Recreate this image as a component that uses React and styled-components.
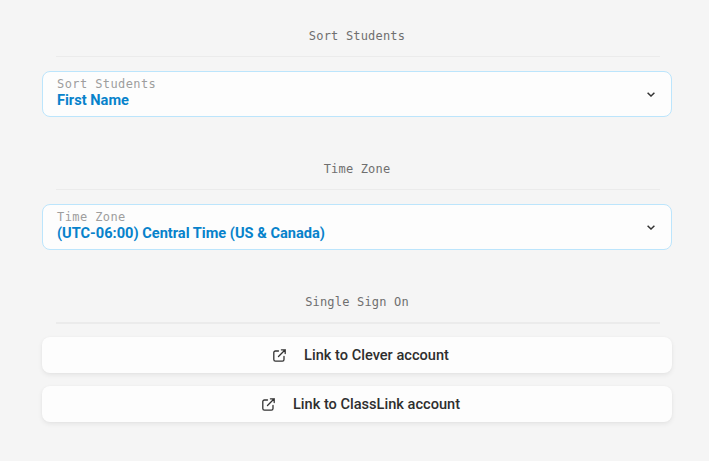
import React from "react";
import styled, { createGlobalStyle } from "styled-components";

const Global = createGlobalStyle`
  html, body { margin: 0; padding: 0; background: #f5f5f5; }
  body { font-family: Roboto, sans-serif; }
`;
const Page = styled.div`
  width: 709px; height: 461px; box-sizing: border-box; overflow: hidden;
  padding: 0 37px 0 42px; display: flex; flex-direction: column;
`;
const Section = styled.section`
  display: flex; flex-direction: column;
`;
const Heading = styled.h2`
  margin: 0 12px 0 14px; height: ${p => p.$height}px; box-sizing: border-box;
  padding: ${p => p.$top}px 2px 0 0;
  font: 400 12px/16px "DejaVu Sans Mono", monospace; letter-spacing: 0.18px;
  color: #6f6f6f; text-align: center;
  border-bottom: ${p => p.$thick ? 2 : 1}px solid #ebebeb;
`;
const SelectBox = styled.div`
  margin-top: 14px; height: 46px; box-sizing: border-box;
  border: 1px solid #bce5fc; border-radius: 8px; background: #fdfdfd;
  padding: 0 16px 0 14px; display: flex; align-items: center; justify-content: space-between;
`;
const SelectText = styled.div`
  display: flex; flex-direction: column; align-self: flex-start; padding-top: 5px;
`;
const SelectLabel = styled.span`
  font: 400 12px/15px "DejaVu Sans Mono", monospace; letter-spacing: 0.41px; color: #9e9e9e;
`;
const SelectValue = styled.span`
  margin-top: -1px; font: 700 14.6px/19px Roboto, sans-serif; color: #0782cb;
`;
const Chevron = styled.svg`width: 8px; height: 5px; flex: none;`;
const LinkButton = styled.button`
  height: 36px; margin-top: 13px; border: 0; border-radius: 8px; background: #fdfdfd;
  box-shadow: 0 2px 5px rgba(0,0,0,.07), 0 0 2px rgba(0,0,0,.03);
  display: flex; align-items: center; justify-content: center; gap: 18px;
  font: 500 14.6px/20px Roboto, sans-serif; color: #2e2e2e; padding: 0 0 0 8px;
`;
const LinkIcon = styled.svg`width: 13px; height: 13px; flex: none;`;

const Arrow = () => (
  <Chevron viewBox="0 0 8 5" fill="none" stroke="#333" strokeWidth="1.5">
    <path d="M.6.8 4 4 7.4.8" />
  </Chevron>
);
const External = () => (
  <LinkIcon viewBox="0 0 13 13" fill="none" stroke="#333" strokeWidth="1.3" strokeLinecap="round" strokeLinejoin="round">
    <path d="M5.5 2H2.4A1.6 1.6 0 0 0 .8 3.6v7a1.6 1.6 0 0 0 1.6 1.6h7a1.6 1.6 0 0 0 1.6-1.6V7.5" />
    <path d="M5.5 7.5 12.2.8M8.4.8h3.8v3.8" />
  </LinkIcon>
);
const Select = ({ label, value }) => (
  <SelectBox>
    <SelectText><SelectLabel>{label}</SelectLabel><SelectValue>{value}</SelectValue></SelectText>
    <Arrow />
  </SelectBox>
);

export default function App() {
  return (
    <Page>
      <Global />
      <Section>
        <Heading $height={57} $top={28}>Sort Students</Heading>
        <Select label="Sort Students" value="First Name" />
      </Section>
      <Section>
        <Heading $height={73} $top={44}>Time Zone</Heading>
        <Select label="Time Zone" value="(UTC-06:00) Central Time (US & Canada)" />
      </Section>
      <Section>
        <Heading $height={74} $top={44} $thick>Single Sign On</Heading>
        <LinkButton><External />Link to Clever account</LinkButton>
        <LinkButton><External />Link to ClassLink account</LinkButton>
      </Section>
    </Page>
  );
}
